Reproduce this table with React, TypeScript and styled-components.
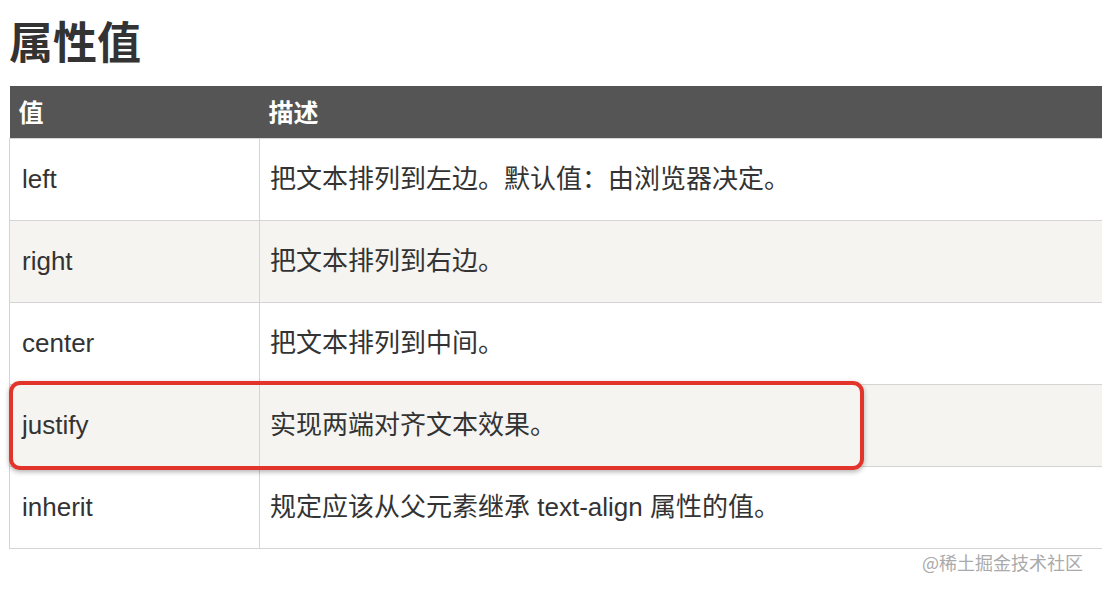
import React from "react";
import styled, { createGlobalStyle } from "styled-components";

const Global = createGlobalStyle`
  html, body { margin: 0; padding: 0; background: #fff; }
  body { font-family: "Liberation Sans", "Noto Sans CJK SC", sans-serif; color: #333; }
`;

const Page = styled.div`
  width: 1102px;
  height: 590px;
  overflow: hidden;
  position: relative;
`;

const Title = styled.h1`
  margin: 0;
  padding: 10px 0 0 9px;
  height: 86px;
  box-sizing: border-box;
  font-family: "Noto Sans CJK SC", sans-serif;
  font-size: 44px;
  font-weight: 700;
  line-height: 60px;
  color: #333;
`;

const TableWrap = styled.div`
  position: relative;
  margin-left: 9px;
  width: 1110px;
`;

const Table = styled.table`
  width: 1110px;
  border-collapse: collapse;
  table-layout: fixed;
`;

const HeadCell = styled.th`
  background: #555;
  color: #fff;
  height: 52px;
  padding: 0 0 2px 9px;
  text-align: left;
  font-family: "Noto Sans CJK SC", sans-serif;
  font-size: 25px;
  font-weight: 700;
  box-sizing: border-box;
`;

const Row = styled.tr<{ $alt?: boolean }>`
  background: ${(p) => (p.$alt ? "#f5f4f0" : "#fff")};
`;

const Cell = styled.td<{ $pad?: number }>`
  height: 82px;
  padding: 0 0 0 ${(p) => p.$pad ?? 12}px;
  border: 1.5px solid #d4d4d4;
  font-size: 26px;
  line-height: 36px;
  color: #333;
  box-sizing: border-box;
  vertical-align: middle;
  font-family: "Liberation Sans", "Noto Sans CJK SC", sans-serif;
`;

const Highlight = styled.div`
  position: absolute;
  left: 0;
  top: 295px;
  width: 855px;
  height: 89px;
  border: 4.5px solid #e2342a;
  border-radius: 11px;
  box-sizing: border-box;
  box-shadow: 0 2px 5px rgba(0, 0, 0, 0.3);
  pointer-events: none;
`;

const Watermark = styled.div`
  text-align: right;
  padding: 0 19px 0 0;
  font-family: "Noto Sans CJK SC", sans-serif;
  font-size: 18px;
  color: #aaa;
`;

const rows: [string, string][] = [
  ["left", "把文本排列到左边。默认值：由浏览器决定。"],
  ["right", "把文本排列到右边。"],
  ["center", "把文本排列到中间。"],
  ["justify", "实现两端对齐文本效果。"],
  ["inherit", "规定应该从父元素继承 text-align 属性的值。"],
];

export default function App() {
  return (
    <Page>
      <Global />
      <Title>属性值</Title>
      <TableWrap>
        <Table>
          <colgroup>
            <col style={{ width: 250 }} />
            <col />
          </colgroup>
          <thead>
            <tr>
              <HeadCell>值</HeadCell>
              <HeadCell>描述</HeadCell>
            </tr>
          </thead>
          <tbody>
            {rows.map(([v, d], i) => (
              <Row key={v} $alt={i % 2 === 1}>
                <Cell>{v}</Cell>
                <Cell $pad={10}>{d}</Cell>
              </Row>
            ))}
          </tbody>
        </Table>
        <Highlight />
      </TableWrap>
      <Watermark>@稀土掘金技术社区</Watermark>
    </Page>
  );
}
